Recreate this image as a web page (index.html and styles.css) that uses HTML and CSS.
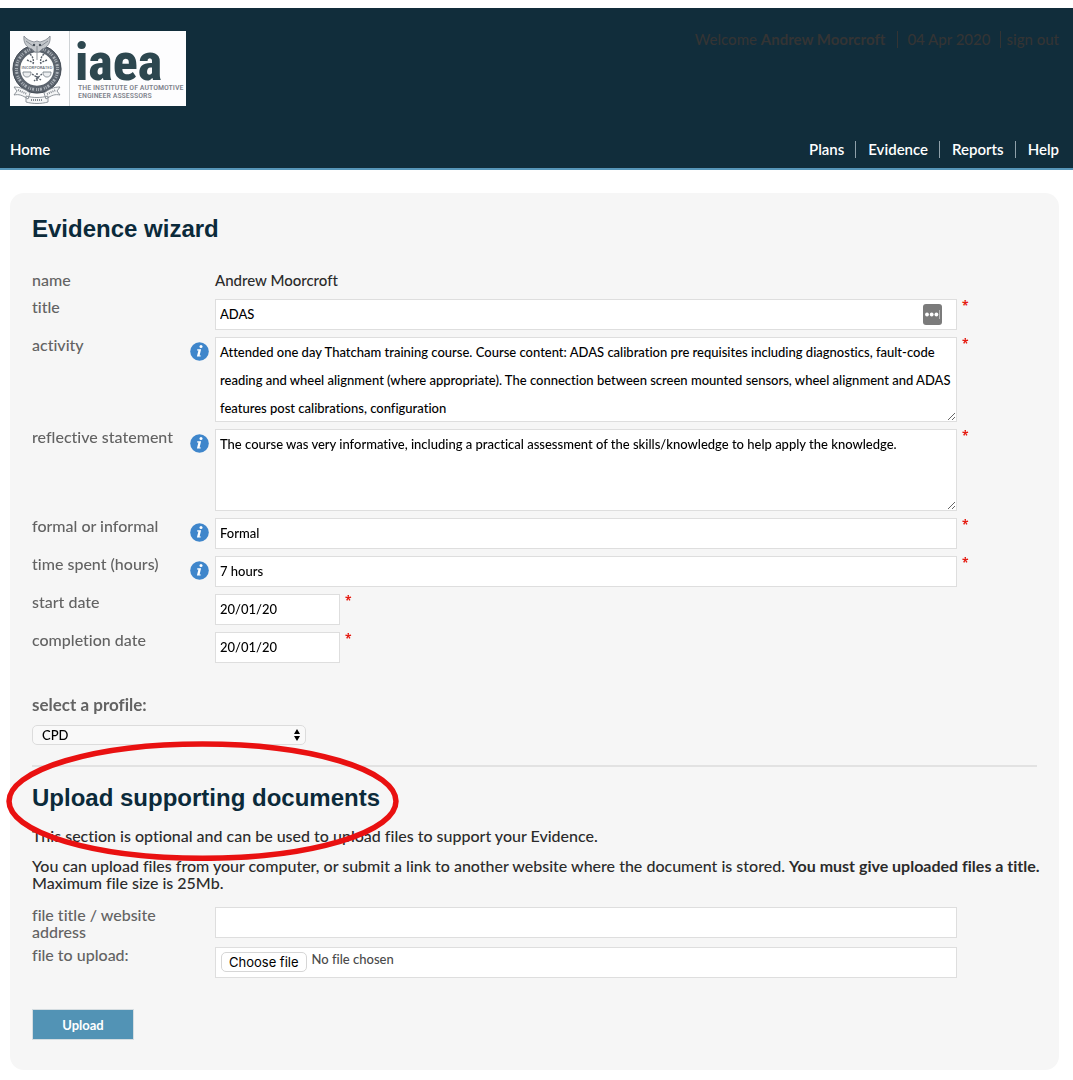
FILE: index.html
```
<!DOCTYPE html>
<html lang="en">
<head>
<meta charset="utf-8">
<meta name="viewport" content="width=device-width, initial-scale=1">
<title>Evidence wizard</title>
<link rel="stylesheet" href="styles.css">
</head>
<body>
<svg class="defs" aria-hidden="true">
  <symbol id="info" viewBox="0 0 19 19">
    <circle cx="9.500" cy="9.500" r="9.300" fill="#3f86cb"/>
    <circle cx="11" cy="4.600" r="1.500" fill="#fff"/>
    <path d="M7.300 7.300h3.800l-1.500 6.200h1.300l-.3 1.100H6.900l1.500-6.200H7z" fill="#fff"/>
  </symbol>
</svg>

<header class="site-header">
  <div class="top">
    <a class="logo" href="#" aria-label="iaea home">
      <svg width="176" height="75" viewBox="0 0 176 75">
        <path fill="#fdfdfe" d="M0 0h176v75H0z"/>
        <path stroke="#cfd3d6" d="M59.500 0v75"/>
        <circle cx="27" cy="38" r="20.500" fill="#fff" stroke="#5b636d" stroke-width="7.500"/>
        <circle cx="27" cy="38" r="20.500" fill="none" stroke="#a9afb6" stroke-width="3" stroke-dasharray="1 2 2 1 1 1"/>
        <circle cx="27" cy="38" r="24" fill="none" stroke="#444c56"/>
        <path fill="#c3c7cb" stroke="#7c838b" stroke-width=".8" d="M14 5c2 3 6 5 10 6l3-1 3 1c4-1 8-3 10-6 1 7-3 12-8 13l-3 3h-4l-3-3c-5-1-9-6-8-13z"/>
        <path fill="none" stroke="#777e87" stroke-width=".8" d="M16 10l7 5M38 10l-7 5M27 15v14"/>
        <circle cx="24" cy="14" r="1.200" fill="#444c56"/><circle cx="30" cy="14" r="1.200" fill="#444c56"/>
        <path fill="none" stroke="#59616b" stroke-width="1.400" stroke-dasharray="2 1" d="M20 23c3 3 4 6 3 10M34 23c-3 3-4 6-3 10M17 29l7 3M37 29l-7 3M27 42v9M22 43l9 6M32 43l-8 7"/>
        <text class="logo-tiny" x="27" y="37.500" text-anchor="middle">INCORPORATED</text>
        <path fill="#eceef0" stroke="#7c838b" stroke-width=".9" d="M13 41h8c0 4-2 5-4 5s-4-1-4-5zM33 41h8c0 4-2 5-4 5s-4-1-4-5z"/>
        <path fill="#f5f6f7" stroke="#858b92" stroke-width=".9" d="M4 56l3 4-3 4c5-1 8 0 14 4l2-6c-5-4-10-6-16-6zM50 56l-3 4 3 4c-5-1-8 0-14 4l-2-6c5-4 10-6 16-6zM16 65c7 2 15 2 22 0v6c-7 2-15 2-22 0z"/>
        <path stroke="#858b92" stroke-width="2" stroke-dasharray="1 1" d="M8 59l9 4M37 63l9-4M21 69h12"/>
        <text class="logo-name" x="65" y="49">iaea</text>
        <text class="logo-line" x="68" y="59">THE INSTITUTE OF AUTOMOTIVE</text>
        <text class="logo-line" x="68" y="67">ENGINEER ASSESSORS</text>
      </svg>
    </a>
    <div class="account"><span>Welcome <b>Andrew Moorcroft</b></span><span class="date">04 Apr 2020</span><a href="#">sign out</a></div>
  </div>
  <nav class="nav">
    <a class="home" href="#">Home</a>
    <ul>
      <li><a href="#">Plans</a></li>
      <li><a href="#">Evidence</a></li>
      <li><a href="#">Reports</a></li>
      <li><a href="#">Help</a></li>
    </ul>
  </nav>
</header>

<main class="panel">
  <h1>Evidence wizard</h1>
  <form>
    <div class="fields">
      <span class="label">name</span><span class="name">Andrew Moorcroft</span>

      <label for="title">title</label>
      <div class="control with-badge"><input id="title" type="text" value="ADAS">
        <svg class="badge" width="19" height="21" viewBox="0 0 19 21" aria-hidden="true"><rect width="19" height="21" rx="3" fill="#7b7b7b"/><circle cx="4" cy="10.500" r="1.900" fill="#fff"/><circle cx="8.700" cy="10.500" r="1.900" fill="#fff"/><circle cx="13.400" cy="10.500" r="1.900" fill="#fff"/><path d="M16.500 6v9" stroke="#bbb"/></svg>
      </div><span class="star">*</span>

      <label for="activity">activity</label>
      <svg class="info"><use href="#info"/></svg>
      <textarea class="control tall" id="activity">Attended one day Thatcham training course. Course content: ADAS calibration pre requisites including diagnostics, fault-code reading and wheel alignment (where appropriate). The connection between screen mounted sensors, wheel alignment and ADAS features post calibrations, configuration</textarea><span class="star">*</span>

      <label for="reflect">reflective statement</label>
      <svg class="info"><use href="#info"/></svg>
      <textarea class="control" id="reflect">The course was very informative, including a practical assessment of the skills/knowledge to help apply the knowledge.</textarea><span class="star">*</span>

      <label for="formal">formal or informal</label>
      <svg class="info"><use href="#info"/></svg>
      <input class="control" id="formal" type="text" value="Formal"><span class="star">*</span>

      <label for="hours">time spent (hours)</label>
      <svg class="info"><use href="#info"/></svg>
      <input class="control" id="hours" type="text" value="7 hours"><span class="star">*</span>

      <label for="start">start date</label>
      <div class="control short"><input id="start" type="text" value="20/01/20"><span class="star">*</span></div>

      <label for="end">completion date</label>
      <div class="control short"><input id="end" type="text" value="20/01/20"><span class="star">*</span></div>
    </div>

    <label class="profile-label" for="profile">select a profile:</label>
    <div class="profile">
      <select id="profile"><option>CPD</option></select>
      <svg class="arrows" width="6" height="12" viewBox="0 0 6 12" aria-hidden="true"><path d="M3 0l3 5H0zM3 12L0 7h6z"/></svg>
    </div>
    <hr>

    <section class="upload">
      <svg class="ring" viewBox="0 0 392 120" aria-hidden="true"><ellipse cx="196" cy="60" rx="193" ry="57" fill="none" stroke="#e91111" stroke-width="5.500"/></svg>
      <h2>Upload supporting documents</h2>
      <p>This section is optional and can be used to upload files to support your Evidence.</p>
      <p class="note">You can upload files from your computer, or submit a link to another website where the document is stored. <b>You must give uploaded files a title.</b> Maximum file size is 25Mb.</p>
      <div class="fields">
        <label for="address">file title / website address</label>
        <input class="control" id="address" type="text">
        <span class="label">file to upload:</span>
        <div class="control file">
          <input id="file" type="file"><label for="file">Choose file</label><span>No file chosen</span>
        </div>
      </div>
      <button class="submit" type="button">Upload</button>
    </section>
  </form>
</main>
</body>
</html>
```
FILE: styles.css
```
* { box-sizing: border-box; }

body {
  margin: 0;
  padding: 8px 0;
  background: #fff;
  color: #2b2b2b;
  font: 500 15px/17px Lato, sans-serif;
  font-variant-ligatures: none;
}

a { color: inherit; text-decoration: none; }
.defs { position: absolute; width: 0; height: 0; }

/* Header */
.site-header {
  padding: 23px 14px 9px 10px;
  background: #112d3b;
  border-bottom: 2px solid #5796b9;
}
.top { display: flex; justify-content: space-between; align-items: flex-start; }
.logo svg { display: block; }
.logo-name { font: 800 52px "Roboto Condensed", sans-serif; fill: #2d474f; }
.logo-line { font: 500 8px "Roboto Condensed", sans-serif; fill: #7d838c; }
.logo-tiny { font: 600 4px "Open Sans", sans-serif; fill: #59616b; }
.account { display: flex; color: #343434; }
.date { margin: 0 5px 0 12px; padding: 0 10px 0 9px; border: solid #343434; border-width: 0 1px; }

.nav {
  display: flex;
  justify-content: space-between;
  align-items: center;
  margin-top: 33px;
  color: #fff;
  font-weight: 600;
  line-height: 20px;
}
.nav ul { display: flex; margin: 0; padding: 0; list-style: none; line-height: 17px; }
.nav li + li { margin-left: 11px; padding-left: 12px; border-left: 1px solid #8fa0aa; }

/* Panel */
.panel {
  margin: 23px 14px 0 10px;
  padding: 22px 12px 30px 22px;
  background: #f6f6f6;
  border-radius: 14px;
}
h1, h2 {
  margin: 0;
  color: #0b2a3a;
  font: bold 24px/28px "Liberation Sans", Arial, sans-serif;
}

.fields {
  display: grid;
  grid-template-columns: 158px 25px minmax(0, 1fr) 90px;
  row-gap: 7px;
  align-items: start;
}
h1 + form > .fields { margin-top: 29px; }
.fields > label, .fields > .label {
  grid-column: 1;
  margin-top: -1px;
  color: #636363;
  font-size: 16px;
}
.name { grid-column: 3; height: 20px; }
.info { grid-column: 2; width: 19px; height: 19px; margin-top: 5px; }
.control { grid-column: 3; display: block; width: 100%; }

input[type="text"], textarea {
  width: 100%;
  height: 31px;
  margin: 0;
  padding: 0 4px 2px;
  border: 1px solid #dedede;
  border-radius: 0;
  background: #fff;
  color: #000;
  font: 500 13px/28px Lato, sans-serif;
  font-variant-ligatures: none;
}
textarea { height: 82px; resize: vertical; }
textarea.tall { height: 85px; }
.with-badge { position: relative; }
.with-badge input { display: block; }
.badge { position: absolute; right: 15px; top: 5px; }
.short { display: flex; }
.short input { width: 125px; }
.star { padding-left: 5px; color: #e51c12; font: bold 12px/13px "Open Sans", sans-serif; }

.profile-label {
  display: block;
  margin-top: 32px;
  color: #636363;
  font-size: 17px;
  font-weight: 700;
  line-height: 20px;
}
.profile { position: relative; width: 274px; margin-top: 10px; }
select {
  display: block;
  width: 100%;
  height: 20px;
  padding: 0 9px;
  appearance: none;
  border: 1px solid #dcdcdc;
  border-radius: 5px;
  background: #f9f9f9;
  color: #000;
  font: 500 13px/17px Lato, sans-serif;
}
.arrows { position: absolute; right: 6px; top: 4px; pointer-events: none; }
hr { margin: 20px 10px 17px 0; border: 0; border-top: 2px solid #e2e2e2; }

/* Upload */
.upload { position: relative; }
.ring { position: absolute; left: -26px; top: -43px; width: 393px; pointer-events: none; }
p { margin: 15px 0 0; font-size: 16px; }
.note { margin: 13px 0 16px; }
.file {
  position: relative;
  display: flex;
  gap: 5px;
  height: 31px;
  padding: 4px 5px;
  border: 1px solid #dedede;
  background: #fff;
  color: #4a4a4a;
  font-size: 13px;
  line-height: 15px;
}
.file input { position: absolute; width: 1px; height: 1px; opacity: 0; }
.file label {
  height: 20px;
  padding: 0 7px;
  border: 1px solid #d6d6d6;
  border-radius: 5px;
  color: #000;
  font: 13px/18px Inter, sans-serif;
}
.submit {
  display: block;
  width: 102px;
  height: 31px;
  margin-top: 31px;
  padding: 2px 0 0;
  border: 1px solid #d5dde1;
  background: #5293b5;
  color: #fff;
  font: bold 13px/27px Lato, sans-serif;
}
```
